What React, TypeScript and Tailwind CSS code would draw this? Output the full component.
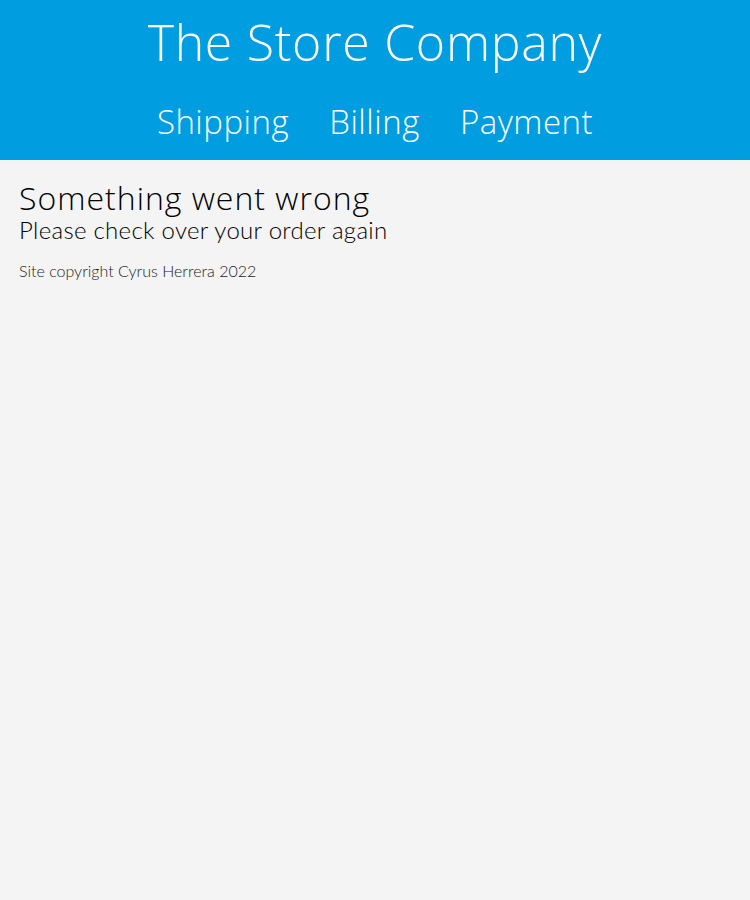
export default function App() {
  return (
    <div className="min-h-[900px] bg-[#f4f4f4] font-['Lato',sans-serif]">
      <header className="flex h-[160px] flex-col items-center bg-[#009ee0] text-white">
        <h1 className="mt-[12px] font-['Open_Sans',sans-serif] text-[50px] font-light leading-[60px] tracking-[0.7px]">
          The Store Company
        </h1>
        <nav className="mt-[30px] flex gap-[40px] font-['Open_Sans',sans-serif] text-[33px] font-light leading-[40px] tracking-[0.5px]">
          <a href="#">Shipping</a>
          <a href="#">Billing</a>
          <a href="#">Payment</a>
        </nav>
      </header>
      <main className="px-[19px] pt-[21px]">
        <h2 className="font-['Open_Sans',sans-serif] text-[32px] font-light leading-[34px] tracking-[1px] text-black">
          Something went wrong
        </h2>
        <p className="text-[24px] font-light leading-[30px] tracking-[0.3px] text-black">
          Please check over your order again
        </p>
        <p className="mt-[14px] text-[16px] font-light text-[#222]">Site copyright Cyrus Herrera 2022</p>
      </main>
    </div>
  )
}
